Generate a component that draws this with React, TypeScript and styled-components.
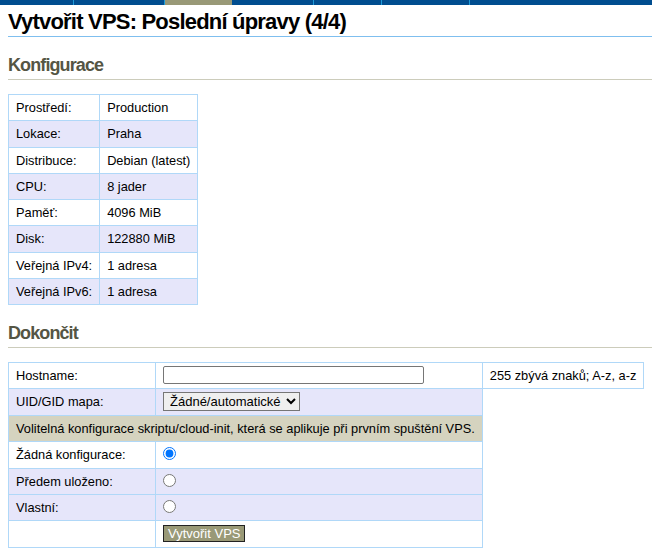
import React from 'react';
import styled, { createGlobalStyle } from 'styled-components';

const GlobalStyle = createGlobalStyle`
  body {
    margin: 0;
    background: #ffffff;
    color: #000000;
    font-family: "Liberation Sans", Arial, sans-serif;
    font-size: 12.8px;
  }
`;

const TopBar = styled.div`
  display: flex;
  height: 5px;
  background: #004d8f;
`;

const Tab = styled.div<{ $width: number; $active?: boolean }>`
  width: ${props => props.$width}px;
  flex: none;
  background: ${props => props.$active ? '#999977' : '#004d8f'};
  border-right: 1px solid ${props => props.$active ? '#999977' : '#1e9ad8'};
`;

const Page = styled.div`
  padding: 0 0 0 8px;
`;

const Title = styled.h1`
  margin: 3px 0 0;
  padding: 0 0 1px;
  font-size: 22px;
  line-height: 27px;
  letter-spacing: -0.8px;
  font-weight: bold;
  border-bottom: 1px solid #7fbfef;
`;

const SectionTitle = styled.h2`
  margin: 17px 0 14px;
  padding: 0 0 3px;
  font-size: 18px;
  line-height: 22px;
  letter-spacing: -0.9px;
  color: #555544;
  border-bottom: 1px solid #ccccbb;
`;

const Table = styled.table`
  border-collapse: collapse;
`;

const Row = styled.tr<{ $tone?: 'plain' | 'alt' | 'note' }>`
  background: ${props =>
    props.$tone === 'alt' ? '#e6e6fa' : props.$tone === 'note' ? '#d5d3bf' : '#ffffff'};
`;

// $pt / $pb: vertical padding override for cells holding form controls
const Cell = styled.td<{ $width?: number; $pt?: number; $pb?: number }>`
  border: 1px solid #b0d8f8;
  padding: ${props => props.$pt ?? 5}px 7px ${props => props.$pb ?? 5}px;
  line-height: 15.25px;
  white-space: nowrap;
  vertical-align: middle;
  ${props => props.$width ? `width: ${props.$width}px;` : ''}
`;

const TextInput = styled.input`
  box-sizing: border-box;
  display: block;
  width: 261px;
  height: 18px;
  margin: 0;
  padding: 1px 2px;
  border: 1px solid #767676;
  border-radius: 2px;
  font: 13px "Liberation Sans", Arial, sans-serif;
`;

const Select = styled.select`
  display: block;
  height: 19px;
  margin: 0;
  padding: 0 2px;
  border: 1px solid #767676;
  border-radius: 0;
  background: #efefef;
  font: 13px "Liberation Sans", Arial, sans-serif;
`;

const Radio = styled.input`
  display: block;
  margin: 0;
  width: 13px;
  height: 13px;
`;

const SubmitButton = styled.button`
  display: block;
  margin: 0;
  padding: 0 4px;
  height: 17px;
  line-height: 15px;
  background: #999977;
  color: #ffffff;
  border: 1px solid #222222;
  border-radius: 0;
  font: 13px "Liberation Sans", Arial, sans-serif;
`;

const tabs = [
  { width: 73 },
  { width: 90 },
  { width: 66, active: true },
  { width: 81 },
  { width: 67 },
  { width: 87 },
  { width: 182 },
];

const config: [string, string][] = [
  ['Prostředí:', 'Production'],
  ['Lokace:', 'Praha'],
  ['Distribuce:', 'Debian (latest)'],
  ['CPU:', '8 jader'],
  ['Paměť:', '4096 MiB'],
  ['Disk:', '122880 MiB'],
  ['Veřejná IPv4:', '1 adresa'],
  ['Veřejná IPv6:', '1 adresa'],
];

const scriptOptions = [
  { value: 'none', label: 'Žádná konfigurace:', tone: 'plain' as const, pb: 8 },
  { value: 'saved', label: 'Předem uloženo:', tone: 'alt' as const, pb: 7 },
  { value: 'custom', label: 'Vlastní:', tone: 'alt' as const, pb: 7 },
];

const App: React.FC = () => {
  const [script, setScript] = React.useState('none');
  const [hostname, setHostname] = React.useState('');

  return (
    <>
      <GlobalStyle />
      <TopBar>
        {tabs.map((tab, i) => (
          <Tab key={i} $width={tab.width} $active={tab.active} />
        ))}
      </TopBar>
      <Page>
        <Title>Vytvořit VPS: Poslední úpravy (4/4)</Title>

        <SectionTitle>Konfigurace</SectionTitle>
        <Table>
          <tbody>
            {config.map(([label, value], i) => (
              <Row key={label} $tone={i % 2 ? 'alt' : 'plain'}>
                <Cell>{label}</Cell>
                <Cell>{value}</Cell>
              </Row>
            ))}
          </tbody>
        </Table>

        <SectionTitle>Dokončit</SectionTitle>
        <Table>
          <tbody>
            <Row>
              <Cell $width={132}>Hostname:</Cell>
              <Cell $pt={3} $pb={4}>
                <TextInput value={hostname} onChange={e => setHostname(e.target.value)} />
              </Cell>
              <Cell>{255 - hostname.length} zbývá znaků; A-z, a-z</Cell>
            </Row>
            <Row $tone="alt">
              <Cell>UID/GID mapa:</Cell>
              <Cell $pt={3} $pb={3}>
                <Select defaultValue="auto">
                  <option value="auto">Žádné/automatické</option>
                </Select>
              </Cell>
            </Row>
            <Row $tone="note">
              <Cell colSpan={2}>
                Volitelná konfigurace skriptu/cloud-init, která se aplikuje při prvním spuštění VPS.
              </Cell>
            </Row>
            {scriptOptions.map(opt => (
              <Row key={opt.value} $tone={opt.tone}>
                <Cell>{opt.label}</Cell>
                <Cell $pb={opt.pb}>
                  <Radio
                    type="radio"
                    name="script"
                    checked={script === opt.value}
                    onChange={() => setScript(opt.value)}
                  />
                </Cell>
              </Row>
            ))}
            <Row>
              <Cell></Cell>
              <Cell $pt={4} $pb={5}>
                <SubmitButton type="button">Vytvořit VPS</SubmitButton>
              </Cell>
            </Row>
          </tbody>
        </Table>
      </Page>
    </>
  );
};

export default App;
